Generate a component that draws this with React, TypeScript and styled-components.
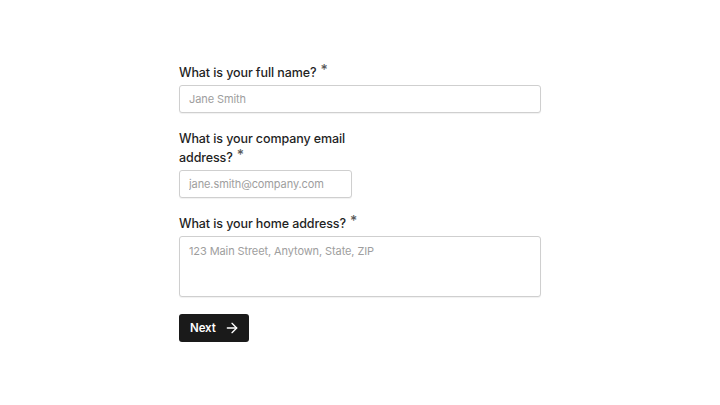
import React from 'react'
import styled, { createGlobalStyle } from 'styled-components'
import { ArrowRight } from 'lucide-react'

const GlobalStyle = createGlobalStyle`
  html, body {
    margin: 0;
    padding: 0;
    background: #ffffff;
    font-family: Inter, "Noto Sans", sans-serif;
    color: #1f1f1f;
  }
  * { box-sizing: border-box; }
`

const Page = styled.div`
  display: flex;
  justify-content: center;
  padding-top: 63px;
  min-height: 405px;
`

const Form = styled.form`
  width: 362px;
  display: flex;
  flex-direction: column;
  gap: 16px;
`

const Field = styled.div<{ $width?: number }>`
  display: flex;
  flex-direction: column;
  gap: 3px;
  width: ${p => (p.$width ? `${p.$width}px` : '100%')};
`

const Label = styled.label`
  font-size: 12.5px;
  font-weight: 500;
  letter-spacing: -0.1px;
  line-height: 19px;
  color: #1f1f1f;
`

const Star = styled.span`
  position: relative;
  top: -2px;
  margin-left: 4px;
  font-size: 14px;
  line-height: 0;
  color: #5a5a5a;
`

const inputBase = `
  width: 100%;
  border: 1px solid #cfcfcf;
  border-radius: 3px;
  box-shadow: 0 1px 1px rgba(0, 0, 0, 0.06);
  font-family: Inter, "Noto Sans", sans-serif;
  font-size: 11px;
  letter-spacing: -0.1px;
  color: #1f1f1f;
  padding: 0 9px;
  outline: none;
  background: #fff;
  &::placeholder { color: #9e9e9e; }
`

const Input = styled.input`
  ${inputBase}
  height: 28px;
`

const TextArea = styled.textarea`
  ${inputBase}
  height: 61px;
  padding-top: 6px;
  resize: none;
  line-height: 16px;
`

const Button = styled.button`
  margin-top: 1px;
  align-self: flex-start;
  display: flex;
  align-items: center;
  gap: 8px;
  height: 28px;
  padding: 0 9px 0 11px;
  background: #1a1a1a;
  color: #ffffff;
  border: none;
  border-radius: 3px;
  font-family: Inter, "Noto Sans", sans-serif;
  font-size: 11.5px;
  letter-spacing: -0.1px;
  font-weight: 600;
  cursor: pointer;
`

export default function App() {
  return (
    <>
      <GlobalStyle />
      <Page>
        <Form onSubmit={e => e.preventDefault()}>
          <Field>
            <Label>
              What is your full name?<Star>*</Star>
            </Label>
            <Input placeholder="Jane Smith" />
          </Field>
          <Field $width={173}>
            <Label>
              What is your company email address?<Star>*</Star>
            </Label>
            <Input placeholder="jane.smith@company.com" />
          </Field>
          <Field>
            <Label>
              What is your home address?<Star>*</Star>
            </Label>
            <TextArea placeholder="123 Main Street, Anytown, State, ZIP" />
          </Field>
          <Button type="submit">
            Next
            <ArrowRight size={16} strokeWidth={2} />
          </Button>
        </Form>
      </Page>
    </>
  )
}
